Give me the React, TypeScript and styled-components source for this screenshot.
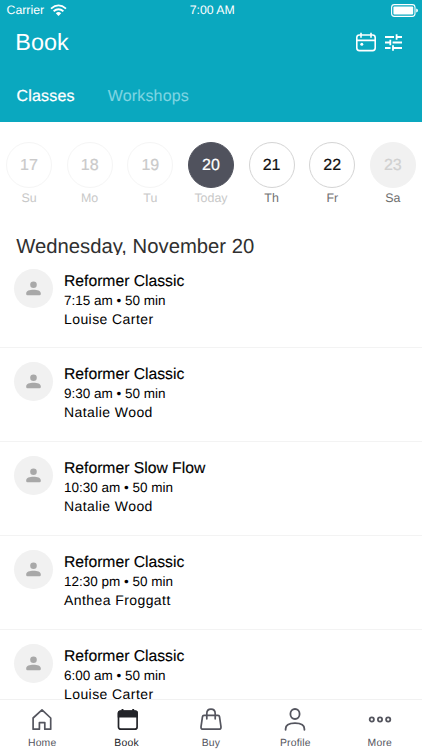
import React from "react";
import styled, { createGlobalStyle } from "styled-components";

const GlobalStyle = createGlobalStyle`
  * { box-sizing: border-box; }
  html, body { margin: 0; padding: 0; background: #fff; overflow: hidden; }
  body {
    font-family: "Liberation Sans", Arial, Helvetica, sans-serif;
    text-rendering: geometricPrecision;
  }
`;

const Screen = styled.div`
  width: 422px;
  height: 750px;
  display: flex;
  flex-direction: column;
  overflow: hidden;
  background: #fff;
`;

const Header = styled.header`
  flex: none;
  height: 122px;
  display: flex;
  flex-direction: column;
  background: #0aa8bf;
  color: #fff;
`;

const StatusBar = styled.div`
  height: 20px;
  flex: none;
  display: grid;
  grid-template-columns: 1fr auto 1fr;
  align-items: center;
  padding: 0 4px 0 6.5px;
  font-size: 12.3px;
  line-height: 20px;
`;

const Carrier = styled.div`
  display: flex;
  align-items: center;
  gap: 6px;
`;

const BatterySlot = styled.div`
  display: flex;
  justify-content: flex-end;
`;

const TitleRow = styled.div`
  height: 44px;
  flex: none;
  display: flex;
  align-items: center;
  justify-content: space-between;
  padding: 0 20px 0 15.3px;
`;

const Title = styled.h1`
  margin: 0;
  font-size: 23.4px;
  font-weight: 400;
  line-height: 28px;
`;

const Actions = styled.div`
  display: flex;
  align-items: center;
  gap: 9.5px;
`;

const IconButton = styled.button`
  display: flex;
  padding: 0;
  border: 0;
  background: none;
  color: inherit;
`;

const TopTabs = styled.nav`
  display: flex;
  gap: 33px;
  padding: 23px 16.5px 0;
`;

const TopTab = styled.span<{ $active?: boolean }>`
  font-size: 16px;
  line-height: 20px;
  letter-spacing: 0.18px;
  color: ${(p) => (p.$active ? "#fff" : "#7fd5e2")};
  -webkit-text-stroke: ${(p) => (p.$active ? "0.25px" : "0.1px")};
`;

const WeekStrip = styled.div`
  flex: none;
  display: grid;
  grid-template-columns: repeat(7, 60.65px);
  margin: 19.5px 0 0 -1.3px;
  height: 96.5px;
`;

const Day = styled.div`
  display: flex;
  flex-direction: column;
  align-items: center;
`;

type Tone = "past" | "current" | "open" | "closed";

const tones: Record<Tone, { bg: string; fg: string; line: string; label: string }> = {
  past: { bg: "#fff", fg: "#cacaca", line: "#f5f5f5", label: "#c8c8c8" },
  current: { bg: "#50525d", fg: "#fff", line: "#50525d", label: "#c8c8c8" },
  open: { bg: "#fff", fg: "#111", line: "#d4d4d4", label: "#707070" },
  closed: { bg: "#f1f1f1", fg: "#d0d0d0", line: "#f1f1f1", label: "#707070" },
};

const DayCircle = styled.div<{ $tone: Tone }>`
  width: 46px;
  height: 46px;
  border-radius: 50%;
  display: flex;
  align-items: center;
  justify-content: center;
  padding-top: 2px;
  font-size: 16px;
  border: 1px solid ${(p) => tones[p.$tone].line};
  background: ${(p) => tones[p.$tone].bg};
  color: ${(p) => tones[p.$tone].fg};
  -webkit-text-stroke: 0.2px;
`;

const DayLabel = styled.div<{ $tone: Tone }>`
  margin-top: 2px;
  font-size: 12.4px;
  line-height: 16px;
  color: ${(p) => tones[p.$tone].label};
`;

const DateHeading = styled.h2`
  flex: none;
  margin: -3px 0 0;
  padding: 1px 0 0 16.3px;
  height: 19.5px;
  overflow: hidden;
  font-size: 20.25px;
  font-weight: 400;
  line-height: 23px;
  color: #303030;
`;

const ClassList = styled.div`
  flex: 1;
  min-height: 0;
  overflow: hidden;
`;

const ClassRow = styled.article`
  height: 93.75px;
  display: flex;
  padding: 14px 14px 0;
  gap: 11px;
  border-bottom: 1px solid #f3f3f3;
`;

const Avatar = styled.div`
  width: 39px;
  height: 39px;
  border-radius: 50%;
  background: #f1f1f1;
  color: #a8a8a8;
  display: flex;
  align-items: center;
  justify-content: center;
`;

const Details = styled.div`
  display: flex;
  flex-direction: column;
  color: #000;
`;

const ClassName = styled.div`
  font-size: 15.7px;
  line-height: 21px;
  margin-top: 2px;
  -webkit-text-stroke: 0.15px;
`;

const ClassTime = styled.div`
  font-size: 13.5px;
  line-height: 18px;
`;

const Teacher = styled.div`
  font-size: 14px;
  line-height: 19px;
  letter-spacing: 0.42px;
`;

const BottomBar = styled.nav`
  flex: none;
  height: 51px;
  display: grid;
  grid-template-columns: repeat(5, 1fr);
  border-top: 1px solid #f1f1f1;
  background: #fff;
`;

const BottomTab = styled.div<{ $active?: boolean }>`
  display: flex;
  flex-direction: column;
  align-items: center;
  padding-top: 6px;
  font-size: 10.4px;
  line-height: 14px;
  letter-spacing: 0.2px;
  gap: 5px;
  color: ${(p) => (p.$active ? "#222328" : "#54555e")};
`;

const WifiIcon = () => (
  <svg width="17" height="13" viewBox="0 0 17 13" fill="none" stroke="currentColor" strokeWidth="1.8">
    <path d="M1 4.6Q8.5-1.8 16 4.6M3.6 7.2Q8.5 3.2 13.4 7.2" />
    <path d="M5.8 9.2Q8.5 7 11.2 9.2L8.5 11.9Z" fill="currentColor" stroke="none" />
  </svg>
);

const BatteryIcon = () => (
  <svg width="27" height="13" viewBox="0 0 27 13" fill="none">
    <rect x=".6" y=".6" width="23.4" height="11.8" rx="2.8" stroke="currentColor" strokeWidth="1.1" />
    <rect x="2.4" y="2.4" width="19.8" height="8.2" rx="1" fill="currentColor" />
    <path d="M25.2 4.4Q27 5 27 6.5T25.2 8.6Z" fill="currentColor" />
  </svg>
);

const CalendarIcon = () => (
  <svg width="20" height="20" viewBox="0 0 20 20" fill="none" stroke="currentColor" strokeWidth="1.6">
    <rect x=".8" y="3" width="18.4" height="15.6" rx="2.6" />
    <path d="M1 8.4h18M5 .8v5M15 .8v5" />
    <circle cx="5.8" cy="12.3" r="1.5" fill="currentColor" stroke="none" />
  </svg>
);

const FilterIcon = () => (
  <svg width="17" height="17" viewBox="0 0 17 17" fill="none" stroke="currentColor" strokeWidth="1.8">
    <path d="M0 3h9M11.5 3H17M11.6.2v5.6M0 8.5h5.2M7.6 8.5H17M5.3 5.7v5.6M0 14h5.5M8 14h9M8 11.2v5.6" />
  </svg>
);

const AvatarIcon = () => (
  <svg width="15" height="15" viewBox="0 0 15 15" fill="currentColor">
    <circle cx="7.5" cy="3.7" r="3.3" />
    <path d="M.2 12.3C.2 9.8 3.6 8.7 7.5 8.7s7.3 1.1 7.3 3.6v.7q0 1.3-1.2 1.3H1.4Q.2 14.3.2 13Z" />
  </svg>
);

const HomeIcon = () => (
  <svg width="24" height="26" viewBox="0 0 24 26" fill="none" stroke="currentColor" strokeWidth="1.7" strokeLinejoin="round">
    <path d="M3.1 12V23.2H9.4V16.6h5.4v6.6h5.9V12L12 3.9Z" />
  </svg>
);

const BookIcon = () => (
  <svg width="24" height="26" viewBox="0 0 24 26" fill="none" stroke="currentColor" strokeWidth="1.7">
    <rect x="3.5" y="5.2" width="18.6" height="18" rx="2.3" />
    <path d="M2.7 11.4V6.8q0-2.4 2.4-2.4h15.4q2.4 0 2.4 2.4v4.6Z" fill="currentColor" stroke="none" />
    <path d="M7.5 3v3M18.2 3v3" strokeWidth="1.9" />
  </svg>
);

const BuyIcon = () => (
  <svg width="24" height="26" viewBox="0 0 24 26" fill="none" stroke="currentColor" strokeWidth="1.7" strokeLinecap="round">
    <path d="M5 9.4h14q1.3 0 1.5 1.2l1.5 10.2q.2 2.4-2 2.4H4q-2.2 0-2-2.4l1.5-10.2Q3.7 9.4 5 9.4Z" />
    <path d="M7.8 12.8V7.8Q7.8 3.2 12 3.2t4.2 4.6v5" />
  </svg>
);

const ProfileIcon = () => (
  <svg width="24" height="26" viewBox="0 0 24 26" fill="none" stroke="currentColor" strokeWidth="1.8" strokeLinecap="round">
    <ellipse cx="12" cy="8" rx="4.6" ry="5" />
    <path d="M2.6 23.8V23q0-5.8 9.4-5.8t9.4 5.8v.8" />
  </svg>
);

const MoreIcon = () => (
  <svg width="24" height="26" viewBox="0 0 24 26" fill="none" stroke="currentColor" strokeWidth="1.8">
    <circle cx="3.8" cy="13.5" r="2.1" />
    <circle cx="12" cy="13.5" r="2.1" />
    <circle cx="20.2" cy="13.5" r="2.1" />
  </svg>
);

const week: { date: number; label: string; tone: Tone }[] = [
  { date: 17, label: "Su", tone: "past" },
  { date: 18, label: "Mo", tone: "past" },
  { date: 19, label: "Tu", tone: "past" },
  { date: 20, label: "Today", tone: "current" },
  { date: 21, label: "Th", tone: "open" },
  { date: 22, label: "Fr", tone: "open" },
  { date: 23, label: "Sa", tone: "closed" },
];

const classes = [
  { name: "Reformer Classic", time: "7:15 am • 50 min", teacher: "Louise Carter" },
  { name: "Reformer Classic", time: "9:30 am • 50 min", teacher: "Natalie Wood" },
  { name: "Reformer Slow Flow", time: "10:30 am • 50 min", teacher: "Natalie Wood" },
  { name: "Reformer Classic", time: "12:30 pm • 50 min", teacher: "Anthea Froggatt" },
  { name: "Reformer Classic", time: "6:00 am • 50 min", teacher: "Louise Carter" },
];

const tabs = [
  { label: "Home", Icon: HomeIcon },
  { label: "Book", Icon: BookIcon },
  { label: "Buy", Icon: BuyIcon },
  { label: "Profile", Icon: ProfileIcon },
  { label: "More", Icon: MoreIcon },
];

export default function App() {
  return (
    <Screen>
      <GlobalStyle />
      <Header>
        <StatusBar>
          <Carrier>Carrier <WifiIcon /></Carrier>
          <span>7:00 AM</span>
          <BatterySlot><BatteryIcon /></BatterySlot>
        </StatusBar>
        <TitleRow>
          <Title>Book</Title>
          <Actions>
            <IconButton aria-label="Calendar"><CalendarIcon /></IconButton>
            <IconButton aria-label="Filters"><FilterIcon /></IconButton>
          </Actions>
        </TitleRow>
        <TopTabs>
          <TopTab $active>Classes</TopTab>
          <TopTab>Workshops</TopTab>
        </TopTabs>
      </Header>
      <WeekStrip>
        {week.map((d) => (
          <Day key={d.date}>
            <DayCircle $tone={d.tone}>{d.date}</DayCircle>
            <DayLabel $tone={d.tone}>{d.label}</DayLabel>
          </Day>
        ))}
      </WeekStrip>
      <DateHeading>Wednesday, November 20</DateHeading>
      <ClassList>
        {classes.map((c, i) => (
          <ClassRow key={i}>
            <Avatar><AvatarIcon /></Avatar>
            <Details>
              <ClassName>{c.name}</ClassName>
              <ClassTime>{c.time}</ClassTime>
              <Teacher>{c.teacher}</Teacher>
            </Details>
          </ClassRow>
        ))}
      </ClassList>
      <BottomBar>
        {tabs.map(({ label, Icon }) => (
          <BottomTab key={label} $active={label === "Book"}>
            <Icon />
            {label}
          </BottomTab>
        ))}
      </BottomBar>
    </Screen>
  );
}
